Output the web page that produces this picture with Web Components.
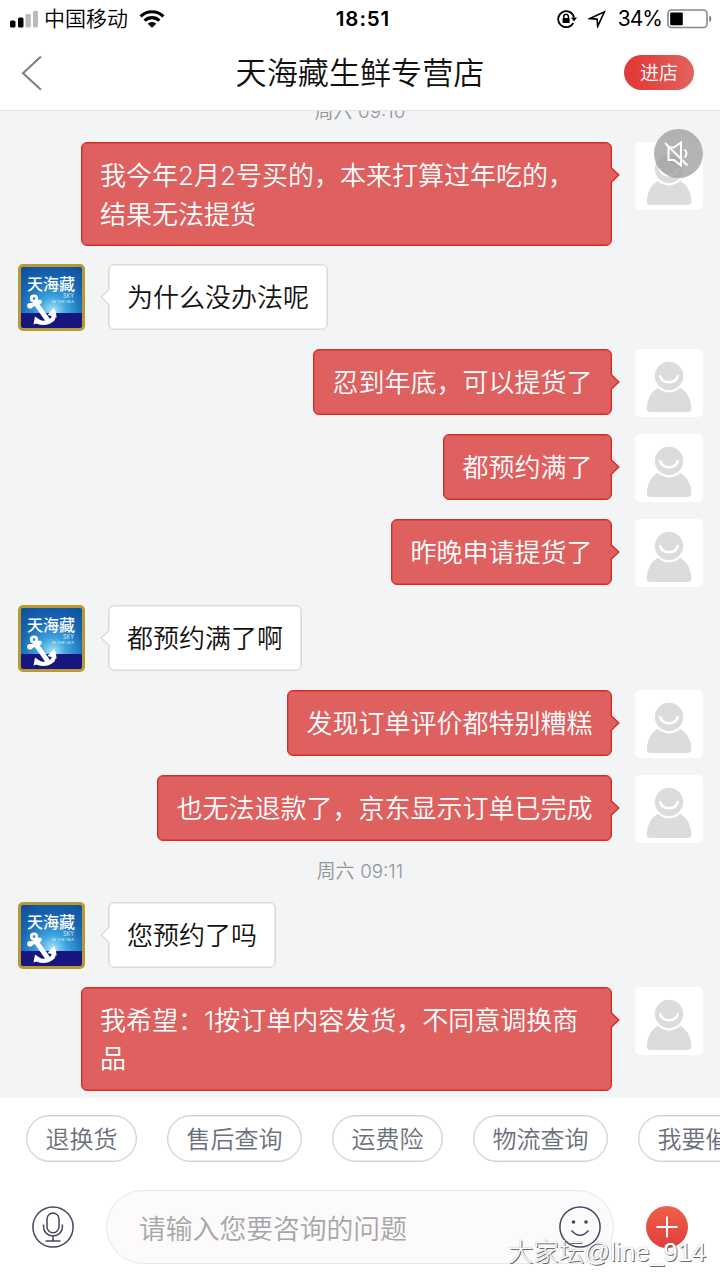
<!DOCTYPE html>
<html lang="zh-CN">
<head>
<meta charset="utf-8">
<title>天海藏生鲜专营店</title>
<style>
html,body{margin:0;padding:0;background:#fff}
body{width:720px;height:1280px;overflow:hidden;font-family:Inter,"Noto Sans CJK SC",sans-serif;font-weight:350}
</style>
</head>
<body>
<chat-app></chat-app>
<script>
const define = (name, html) => customElements.define(name, class extends HTMLElement {
  constructor() {
    super();
    const t = document.createElement('template');
    t.innerHTML = html;
    this.attachShadow({mode: 'open'}).append(t.content.cloneNode(true));
  }
});

define('status-bar', `
<style>
:host{display:grid;grid-template-columns:1fr auto 1fr;align-items:center;height:36px;padding:0 9px 0 10px;color:#000}
.l,.r{display:flex;align-items:center}
.r{justify-content:flex-end}
svg{display:block;flex:none}
.c{font-size:21px;line-height:36px;margin:1px 11px 0 6px;font-weight:350}
.t{font:600 20.5px/36px Inter,sans-serif;letter-spacing:.9px;padding-left:5px;padding-top:1px}
.p{font:400 21px/36px Inter,sans-serif;margin:1px 6px 0 12px;letter-spacing:-1px}
</style>
<div class="l">
<svg width="28" height="18" viewBox="0 0 28 18"><rect x="0" y="10.5" width="5.5" height="7" rx="1.5"/><rect x="8" y="7.5" width="5.5" height="10" rx="1.5"/><rect x="15.5" y="4" width="5.3" height="13.5" rx="1.5" fill="#bbb"/><rect x="23" y="0.8" width="5" height="16.7" rx="1.5" fill="#bbb"/></svg>
<span class="c">中国移动</span>
<svg width="26" height="18" viewBox="0 0 26 18" fill="none" stroke="#000" stroke-width="3.1"><path d="M1.6 6.4a16.2 16.2 0 0 1 22.8 0"/><path d="M5.6 10.6a10.6 10.6 0 0 1 14.8 0"/><path d="M8.7 13.8a6.2 6.2 0 0 1 8.6 0L13 17.8z" fill="#000" stroke="none"/></svg>
</div>
<span class="t">18:51</span>
<div class="r">
<svg width="20" height="18" viewBox="0 0 20 18" fill="none" stroke="#000" stroke-width="1.8"><path d="M16.3 12.8A8 8 0 1 1 17 7.5"/><path d="M14 7.6h6l-3 3.8z" fill="#000" stroke="none"/><rect x="5.6" y="8" width="7" height="5" rx=".6" fill="#000" stroke="none"/><path d="M6.8 8.5V6.6a2.3 2.3 0 0 1 4.6 0v1.9" stroke-width="1.5"/></svg>
<svg style="margin-left:11px" width="18" height="18" viewBox="0 0 18 18" fill="none" stroke="#000" stroke-width="1.6"><path d="M2 8.5 16.4 1.8 9.7 16.4 9.1 9.1z"/></svg>
<span class="p" style="margin-right:5px">34%</span>
<svg style="margin-right:-1px" width="45" height="20" viewBox="0 0 45 20"><rect x="1" y="1" width="39" height="17.5" rx="3.5" fill="none" stroke="#898989" stroke-width="1.6"/><rect x="3.2" y="3.4" width="12.6" height="12.8" rx="1"/><path d="M42.3 6.5q2 1 2 3.4t-2 3.4z" fill="#777"/></svg>
</div>`);

define('title-bar', `
<style>
:host{display:grid;grid-template-columns:1fr auto 1fr;align-items:center;height:73px;padding:0 26px 1px 21px;border-bottom:1px solid #e2e2e4;box-sizing:content-box}
h1{margin:0;padding-left:5px;font-size:31.1px;line-height:73px;position:relative;top:1px;font-weight:350;color:#111}
svg{display:block}
button{justify-self:end;width:70px;height:35px;padding:0 0 2px;border:0;border-radius:18px;background:linear-gradient(90deg,#e03c38 15%,#e4625f);color:#fff;font:350 19px/33px "Noto Sans CJK SC",sans-serif}
</style>
<svg width="22" height="36" viewBox="0 0 22 36"><path d="M20 1.5 2 18.3 20 34.7" fill="none" stroke="#808083" stroke-width="2.1"/></svg>
<h1><slot></slot></h1>
<button>进店</button>`);

define('user-avatar', `
<style>
:host{display:block;width:68px;height:68px;border-radius:5px;background:#fff}
svg{display:block}
</style>
<svg width="68" height="68" viewBox="0 0 68 68"><path d="M11.800 60.300C11.800 48 18 40.500 26 37h16c8 3.500 14.400 11 14.400 23.300q-.4 2.700-4 2.700H15.800q-3.600 0-4-2.700z" fill="#dcdcdc"/><circle cx="34" cy="27" r="16.400" fill="#fff"/><circle cx="34" cy="27" r="14.200" fill="#dcdcdc"/><path d="M25.200 27.200c2.200 8 15.400 8 17.600 0" fill="none" stroke="#fff" stroke-width="2.500" stroke-linecap="round"/></svg>`);

define('shop-avatar', `
<style>
:host{display:grid;align-content:start;box-sizing:border-box;width:67px;height:67px;border:3.5px solid #b89a31;border-radius:5px;position:relative;
background:linear-gradient(transparent 75%,#17157e 75%),radial-gradient(circle at 52% 72%,#a9e4f8 0,#3fa5de 25%,#1767b5 60%,#0d4d99 100%)}
b{font-size:16px;line-height:19px;height:18px;font-weight:500;color:#fff;margin:8px 0 0 6px;white-space:nowrap}
i{font:400 5.5px/6px Inter,sans-serif;color:#d9f1fb;text-align:right;padding-right:8px}
i+i{font-size:4px;line-height:5px}
svg{position:absolute;left:4px;top:27px}
</style>
<b>天海藏</b><i>SKY</i><i>IN THE SEA</i>
<svg width="36" height="34" viewBox="0 0 36 34" fill="none" stroke="#fff"><circle cx="9" cy="4.600" r="2.700" stroke-width="2.800"/><path d="M10 8 23 26.500" stroke-width="4.800"/><path d="M5 12.300 14.500 7.500" stroke-width="3.800"/><circle cx="5" cy="11.800" r="2.800" fill="#fff" stroke="none"/><circle cx="14.500" cy="7.800" r="2.400" fill="#fff" stroke="none"/><path d="M12 27.500q9 3.500 15.500-2 2-3 1.500-8" stroke-width="4.200"/><path d="M8.500 30.500l1.500-8 7.500 5zM22.500 21l6.800-7.500 2.500 10z" fill="#fff" stroke="none"/></svg>`);

define('chat-message', `
<style>
:host{display:flex;align-items:flex-start;gap:23px;height:85px;padding:0 17px 0 18px}
:host([me]){justify-content:flex-end}
:host([tall]){height:122px}
.b{position:relative;box-sizing:border-box;min-height:66px;padding:13px 18px 12px;border:1px solid #dadbdd;box-shadow:inset 0 0 0 .6px #dadbdd;border-radius:6px;background:#fff;color:#111;font-size:26px;line-height:39px}
:host([me]) .b{background:#de605f;border-color:#dc2b24;box-shadow:inset 0 0 0 .4px #dc2b24;color:#fff;line-height:38.500px;padding:14px 18.500px 11.500px}
:host([tall]) .b{width:531px;height:104px;padding-right:0;padding-left:18px;white-space:nowrap}
.tip{position:absolute;top:23px;left:-9px}
:host([me]) .tip{left:auto;right:-9px;transform:scaleX(-1)}
.tip path{fill:#fff;stroke:#dadbdd;stroke-width:1.4}
:host([me]) .tip path{fill:#de605f;stroke:#dc2b24}
:host([me]) shop-avatar,:host(:not([me])) user-avatar{display:none}
</style>
<shop-avatar></shop-avatar>
<div class="b"><svg class="tip" width="11" height="18" viewBox="0 0 11 18"><path d="M9.500 1 1.200 9 9.500 17" /><path d="M10.5 1V17L9 16V2z" style="stroke:none"/></svg><slot></slot></div>
<user-avatar></user-avatar>`);

define('time-stamp', `
<style>:host{display:block;height:42px;text-align:center;font-size:18.800px;line-height:23px;color:#929397;word-spacing:.500px}</style><slot></slot>`);

define('mute-button', `
<style>:host{display:block;width:49px;height:49px;border-radius:50%;background:rgba(157,157,157,.77)}svg{display:block}</style>
<svg width="49" height="49" viewBox="0 0 49 49" fill="none" stroke="#fff" stroke-width="2"><path d="M14.500 18.500V31h5.500l7 5.500V13.500l-7 5z"/><path d="M11 14 33.500 36.500"/><path d="M30.500 20.500a5 5 0 0 1 0 8"/></svg>`);

define('quick-chip', `
<style>:host{display:block;flex:none;box-sizing:border-box;height:47px;padding:1px 18.5px 0;border:1px solid #cfcfd2;box-shadow:inset 0 0 0 .5px #dcdcde;border-radius:24px;background:#fff;color:#6b6f79;font-size:24px;line-height:45px;white-space:nowrap}</style><slot></slot>`);

define('quick-bar', `
<style>:host{display:flex;gap:30px;padding:17px 0 0 26px;height:75px;overflow:hidden}</style><slot></slot>`);

define('input-bar', `
<style>
:host{display:flex;align-items:center;height:74px;padding:0 32px;position:relative;background:#fff}
svg{display:block;flex:none}
.f{display:flex;align-items:center;justify-content:space-between;box-sizing:border-box;width:508px;height:74px;margin:0 32px;padding:0 12px 0 32px;border:1px solid #e9e8ea;border-radius:37px;background:#fcfafb;color:#a6a6a9;font-size:26.800px}
</style>
<svg width="42" height="42" viewBox="0 0 42 42" fill="none" stroke="#474660" stroke-width="1.500"><circle cx="21" cy="21" r="20.100"/><rect x="15" y="7" width="12" height="19.800" rx="6"/><path d="M11.600 18.500v2.800a9.400 8.600 0 0 0 18.800 0v-2.800M21 30v5M13.500 35h15"/></svg>
<div class="f"><span>请输入您要咨询的问题</span>
<svg width="42" height="42" viewBox="0 0 42 42" fill="none" stroke="#474660" stroke-width="1.500"><circle cx="21" cy="21" r="20.100"/><path d="M12.500 24.500q8.500 9.500 17 0"/><circle cx="14.500" cy="16" r="1.800" fill="#474660" stroke="none"/><circle cx="27" cy="16" r="1.800" fill="#474660" stroke="none"/></svg></div>
<svg width="42" height="42" viewBox="0 0 42 42"><defs><linearGradient id="g" x2="0" y2="1"><stop stop-color="#f06049"/><stop offset="1" stop-color="#dc3f3b"/></linearGradient></defs><circle cx="21" cy="21" r="21" fill="url(#g)"/><path d="M10.500 21h21M21 10.500v21" stroke="#fff" stroke-width="1.900"/></svg>`);

define('chat-app', `
<style>
:host{display:flex;flex-direction:column;width:720px;height:1280px;position:relative;overflow:hidden;background:#fff}
.list{height:987px;overflow:hidden;background:#f3f4f6;position:relative;flex:none}
.first{height:42px;margin-top:-11px}
mute-button{position:absolute;right:17.500px;top:18px}
.wm{position:absolute;right:14px;bottom:9px;font:300 25.400px/38px "Liberation Sans","Noto Sans CJK SC",sans-serif;color:#fff;text-shadow:1px 1px 0 #6b6b6b,0 0 1px #999;white-space:nowrap}
</style>
<status-bar></status-bar>
<title-bar>天海藏生鲜专营店</title-bar>
<div class="list">
<time-stamp class="first">周六 09:10</time-stamp>
<chat-message me tall>我今年2月2号买的，本来打算过年吃的，<br>结果无法提货</chat-message>
<chat-message>为什么没办法呢</chat-message>
<chat-message me>忍到年底，可以提货了</chat-message>
<chat-message me>都预约满了</chat-message>
<chat-message me style="height:85.500px">昨晚申请提货了</chat-message>
<chat-message>都预约满了啊</chat-message>
<chat-message me>发现订单评价都特别糟糕</chat-message>
<chat-message me>也无法退款了，京东显示订单已完成</chat-message>
<time-stamp>周六 09:11</time-stamp>
<chat-message>您预约了吗</chat-message>
<chat-message me tall>我希望：1按订单内容发货，不同意调换商<br>品</chat-message>
<mute-button></mute-button>
</div>
<quick-bar><quick-chip>退换货</quick-chip><quick-chip>售后查询</quick-chip><quick-chip>运费险</quick-chip><quick-chip>物流查询</quick-chip><quick-chip>我要催单</quick-chip></quick-bar>
<input-bar></input-bar>
<span class="wm">大家坛@line_914</span>`);
</script>
</body>
</html>
